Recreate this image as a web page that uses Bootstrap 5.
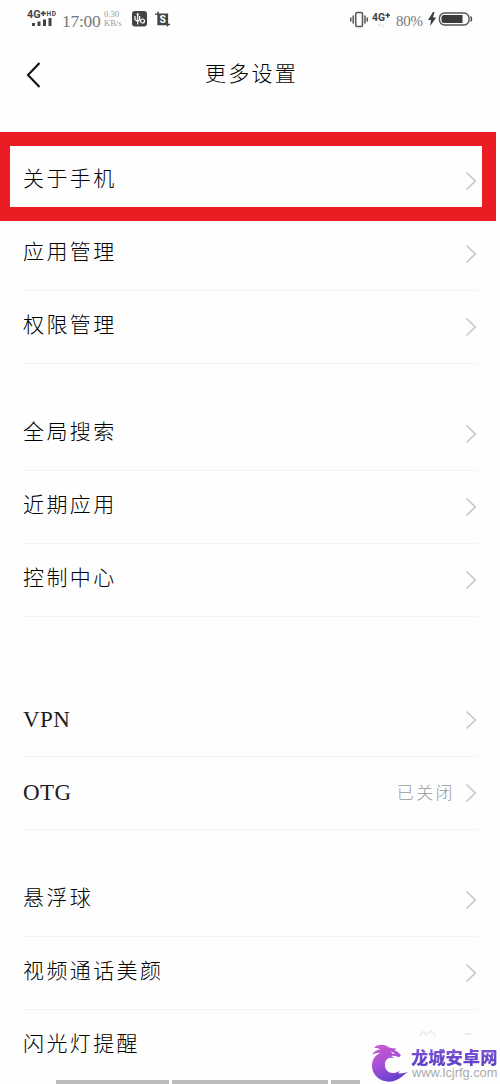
<!DOCTYPE html>
<html lang="zh-CN">
<head>
<meta charset="utf-8">
<meta name="viewport" content="width=device-width, initial-scale=1">
<title>更多设置</title>
<link href="https://cdn.jsdelivr.net/npm/bootstrap@5.3.0/dist/css/bootstrap.min.css" rel="stylesheet">
<style>
body{background:#fefefe;color:#000;font-family:"Liberation Serif","Noto Sans CJK SC",serif;height:1084px;overflow:hidden}
.status{height:38px;padding:0 27px;color:#444}
.status svg{display:block;flex:none}
.clock{font-size:17.5px;line-height:20px;color:#777;width:38px;letter-spacing:-.3px;margin-left:3px}
.rate{font-size:8.5px;line-height:9px;color:#999;width:20px;white-space:nowrap}
.pct{font-size:15px;line-height:20px;width:28px;color:#777;letter-spacing:-.3px}
.titlebar{height:72px;border-bottom:1px solid #fafafa}
.titlebar h1{font-size:21px;letter-spacing:2.3px;line-height:30px;font-weight:300;padding-left:3px}
.titlebar button{left:25px;top:22px}
.settings{padding:35px 22px 0 23px}
.settings .list-group{--bs-list-group-bg:transparent;--bs-list-group-color:#000}
.settings .list-group-item{height:73px;padding:0;border:0;border-bottom:1px solid #f3f3f3}
.settings .list-group-item.plain{border-color:transparent}
.lbl{font-size:21px;letter-spacing:2.4px;line-height:30px;font-weight:300;padding-bottom:4px}
.lbl.latin{font-family:"Liberation Serif",serif;font-size:23px;letter-spacing:.4px;color:#1c1c1c;padding-bottom:0}
.state{font-size:17px;letter-spacing:2.4px;color:#999;font-weight:300;margin-right:10px;padding-top:1px}
.chev{width:12px;height:20px;margin-right:1px;flex:none}
.gap-s{margin-top:34px}
.gap-l{margin-top:67px}
.highlight{left:-2px;top:132px;width:498px;height:89px;border:14px solid #ea1c24;border-left-width:12px;pointer-events:none}
.footer-strip{left:56px;bottom:0;width:304px;height:4px;gap:3px}
.footer-strip i{background:#bcbcbc}
.brand{left:370px;top:1043px;width:130px}
.brand b{font:900 17.3px/20px "Noto Sans CJK SC",sans-serif;background:linear-gradient(#8253d8,#5a3fc4);-webkit-background-clip:text;color:transparent;white-space:nowrap;display:block;margin:4px 0 0 1px}
.brand small{font:12.8px/12px "Liberation Sans",sans-serif;color:#aaa;display:block;margin:0 0 0 2px}
.ghost{left:418px;top:1029px}
</style>
</head>
<body class="position-relative">
<svg width="0" height="0" class="position-absolute"><symbol id="chev" viewBox="0 0 12 20"><path d="M1.5 1.5 10.3 10 1.5 18.5" fill="none" stroke="#c6c6c6" stroke-width="1.6"/></symbol></svg>

<header>
  <div class="status d-flex align-items-center">
    <svg width="32" height="20" viewBox="0 0 32 20" fill="#444"><text x="0" y="9" font-family="Roboto,sans-serif" font-weight="700" font-size="10.5" textLength="13.5" lengthAdjust="spacingAndGlyphs">4G</text><path d="M15.500 2h1.600v1.600h1.800v1.600h-1.800V7h-1.600V5.200h-1.800V3.600h1.800z"/><text x="19.500" y="7" font-family="Roboto,sans-serif" font-weight="700" font-size="6.500" textLength="9.500">HD</text><path d="M5 14h3v3H5zM10.500 12.500h3V17h-3zM16 10.500h3V17h-3zM21.500 9h3v8h-3z"/></svg>
    <span class="clock mt-1">17:00</span>
    <span class="rate ms-1">0.30<br>KB/s</span>
    <svg class="ms-2" width="15" height="16" viewBox="0 0 15 16"><rect width="15" height="15.500" rx="3" fill="#444"/><path d="M5.700 2.500v11M3 5v3.500l2.700 2 2-1.500V5" fill="none" stroke="#fff" stroke-width="1.200"/><path d="M4.300 4 5.700 1.800 7.100 4z" fill="#fff"/><circle cx="10.500" cy="10" r="2" fill="none" stroke="#fff" stroke-width="1.200"/></svg>
    <svg class="ms-2" width="15" height="16" viewBox="0 0 16 16"><path d="M0 2h14v11h2v1.600H2.500V3.500H0zM2.500 0H4v3H2.500zM12.500 13H14v3h-1.500z" fill="#444"/><text x="4.800" y="12" fill="#fff" font-family="Roboto,sans-serif" font-weight="700" font-size="11">S</text></svg>
    <div class="d-flex align-items-center ms-auto">
      <svg width="18" height="17" viewBox="0 0 18 17" fill="none" stroke="#555" stroke-width="1.500"><rect x="5.700" y="1.500" width="6.800" height="14" rx="1.500"/><path d="M3.200 4.500v8M15 4.500v8M.8 6.500v4M17.300 6.500v4"/></svg>
      <svg class="ms-1" width="20" height="18" viewBox="0 0 20 18" fill="#444"><text x="0" y="11" font-family="Roboto,sans-serif" font-weight="700" font-size="10.500" textLength="13" lengthAdjust="spacingAndGlyphs">4G</text><path d="M15 3h1.500v1.600H18v1.500h-1.500v1.700H15V6.100h-1.600V4.600H15z"/><path d="m6 14 1 2 1-2m1.500 2.500 1-2 1 2" fill="none" stroke="#ddd"/></svg>
      <span class="ms-1 mt-1 pct">80%</span>
      <svg class="ms-1" width="45" height="16" viewBox="0 0 45 16"><path d="M5 1 0 9h3l-.8 6L8.200 6.500H5L6.500 1z" fill="#3c3c3c"/><rect x="11.500" y="2" width="29.500" height="12" rx="5" fill="none" stroke="#555" stroke-width="1.400"/><path d="M34.500 4H16q-2.500 0-2.500 2.500v3Q13.500 12 16 12h18.500z" fill="#3c3c3c"/><path d="M42.500 5.500q2 2.500 0 5" fill="none" stroke="#555" stroke-width="1.500"/></svg>
    </div>
  </div>
  <div class="titlebar position-relative d-flex justify-content-center align-items-center">
    <button class="btn p-0 border-0 position-absolute lh-1" aria-label="返回"><svg class="d-block" width="18" height="28" viewBox="0 0 18 28"><path d="M14.500 3 3 15 14.500 27" fill="none" stroke="#111" stroke-width="2.100"/></svg></button>
    <h1 class="m-0">更多设置</h1>
  </div>
</header>

<main class="settings">
  <div class="list-group rounded-0">
    <a class="list-group-item plain d-flex align-items-center justify-content-between"><span class="lbl">关于手机</span><svg class="chev"><use href="#chev"/></svg></a>
    <a class="list-group-item d-flex align-items-center justify-content-between"><span class="lbl">应用管理</span><svg class="chev"><use href="#chev"/></svg></a>
    <a class="list-group-item d-flex align-items-center justify-content-between"><span class="lbl">权限管理</span><svg class="chev"><use href="#chev"/></svg></a>
  </div>
  <div class="list-group rounded-0 gap-s">
    <a class="list-group-item d-flex align-items-center justify-content-between"><span class="lbl">全局搜索</span><svg class="chev"><use href="#chev"/></svg></a>
    <a class="list-group-item d-flex align-items-center justify-content-between"><span class="lbl">近期应用</span><svg class="chev"><use href="#chev"/></svg></a>
    <a class="list-group-item d-flex align-items-center justify-content-between"><span class="lbl">控制中心</span><svg class="chev"><use href="#chev"/></svg></a>
  </div>
  <div class="list-group rounded-0 gap-l">
    <a class="list-group-item d-flex align-items-center justify-content-between"><span class="lbl latin">VPN</span><svg class="chev"><use href="#chev"/></svg></a>
    <a class="list-group-item d-flex align-items-center"><span class="lbl latin me-auto">OTG</span><span class="state">已关闭</span><svg class="chev"><use href="#chev"/></svg></a>
  </div>
  <div class="list-group rounded-0 gap-s">
    <a class="list-group-item d-flex align-items-center justify-content-between"><span class="lbl">悬浮球</span><svg class="chev"><use href="#chev"/></svg></a>
    <a class="list-group-item d-flex align-items-center justify-content-between"><span class="lbl">视频通话美颜</span><svg class="chev"><use href="#chev"/></svg></a>
    <a class="list-group-item plain d-flex align-items-center"><span class="lbl">闪光灯提醒</span></a>
  </div>
</main>

<div class="highlight position-absolute"></div>
<svg class="ghost position-absolute" width="56" height="10" viewBox="0 0 56 10" fill="none" stroke="#ececec" stroke-width="1.800"><path d="M2 7q3-8 7 0M10 5q4-6 7 2M47 5h6"/></svg>
<div class="footer-strip position-absolute d-flex"><i style="width:113px"></i><i style="width:156px"></i><i style="width:29px"></i></div>
<div class="brand position-absolute d-flex">
  <svg class="flex-shrink-0" width="40" height="39" viewBox="12 15 120 117"><defs><linearGradient id="dragon" x1="0" y1="0" x2=".5" y2="1"><stop stop-color="#d35bd0"/><stop offset=".55" stop-color="#a24fd6"/><stop offset="1" stop-color="#6740cf"/></linearGradient></defs><path fill="url(#dragon)" d="M24 29C33 20 54 16 67 28q11 4 25 3l-6 6q13 5 19 15l-6 6q-10-6-24-4l10 6-15-1C53 64 52 90 68 102c10 6 23 3 33-4l-4 8q14 1 31-5C110 108 105 128 70 131 40 131 18 110 18 84c0-20 10-33 25-40q-13-1-25 6 7-12 25-16-7-5-19-5z"/><path d="m75 41 13 5-9 1z" fill="#fff"/></svg>
  <div><b>龙城安卓网</b><small>www.lcjrfg.com</small></div>
</div>
<script src="https://cdn.jsdelivr.net/npm/bootstrap@5.3.0/dist/js/bootstrap.bundle.min.js"></script>
</body>
</html>
